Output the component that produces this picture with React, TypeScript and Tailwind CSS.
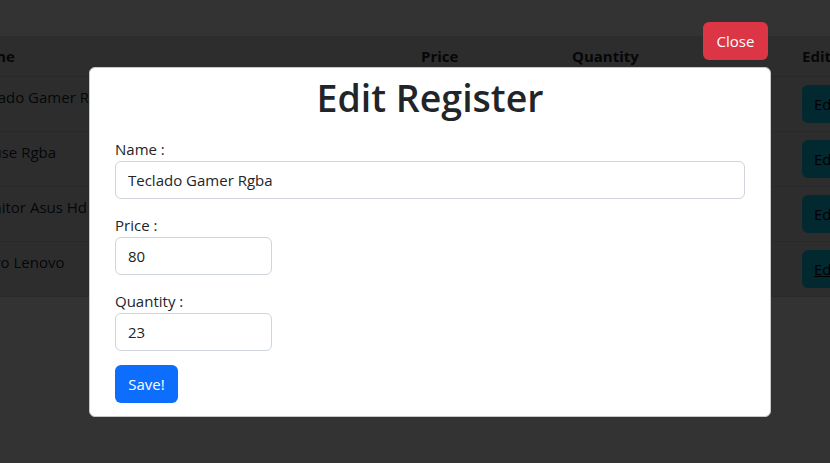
import React from "react";

const rows = [
  { name: "Teclado Gamer Rgba", price: 80, quantity: 23 },
  { name: "Mouse Rgba", price: 35, quantity: 40 },
  { name: "Monitor Asus Hd", price: 210, quantity: 12 },
  { name: "Micro Lenovo", price: 950, quantity: 5 },
];

const Field: React.FC<{ label: string; value: string; wide?: boolean }> = ({
  label,
  value,
  wide,
}) => (
  <div className="mb-[14px] flex flex-col">
    <label className="h-6 leading-6">{label}</label>
    <input
      readOnly
      value={value}
      className={`h-[38px] rounded-[6px] border border-[#ced4da] bg-white px-3 text-[15px] text-[#212529] outline-none ${
        wide ? "w-full" : "w-[157px]"
      }`}
    />
  </div>
);

export default function App() {
  return (
    <div className="relative h-[463px] w-[830px] overflow-hidden bg-white font-['Segoe_UI','Open_Sans',sans-serif] text-[15px] text-[#212529]">
      {/* page under the backdrop */}
      <div className="pt-[36px]">
        <div className="-ml-[38px] w-[900px] bg-[#dee2e6]">
          <div className="grid grid-cols-[451px_151px_230px_68px] border-b border-[#c9cccf] font-bold">
            <div className="p-2 leading-6">Name</div>
            <div className="p-2 leading-6">Price</div>
            <div className="p-2 leading-6">Quantity</div>
            <div className="p-2 leading-6">Edit</div>
          </div>
          {rows.map((r, i) => (
            <div
              key={r.name}
              className="grid grid-cols-[451px_151px_230px_68px] items-start border-b border-[#c9cccf]"
            >
              <div className="p-2 leading-6">{r.name}</div>
              <div className="p-2 leading-6">{r.price}</div>
              <div className="p-2 leading-6">{r.quantity}</div>
              <div className="p-2">
                <button
                  className={`h-[38px] rounded-[6px] bg-[#0dcaf0] px-3 text-black ${
                    i === rows.length - 1 ? "underline" : ""
                  }`}
                >
                  Edit
                </button>
              </div>
            </div>
          ))}
        </div>
      </div>

      {/* backdrop */}
      <div className="absolute inset-0 bg-black/80" />

      {/* modal */}
      <div className="absolute inset-0 pl-[89px] pt-[22px]">
        <div className="flex w-[682px] flex-col items-end">
          <button className="mr-[3px] h-[38px] w-[65px] rounded-[6px] bg-[#dc3545] text-white">
            Close
          </button>
          <div className="mt-[7px] w-full rounded-[6px] border border-[#c8c8c8] bg-white px-[25px] pb-[13px] pt-[6px]">
            <h1 className="mb-[15px] text-center text-[37.5px] leading-[48px] font-semibold text-[#212529]">
              Edit Register
            </h1>
            <Field label="Name :" value="Teclado Gamer Rgba" wide />
            <Field label="Price :" value="80" />
            <Field label="Quantity :" value="23" />
            <button className="h-[38px] w-[63px] rounded-[6px] bg-[#0d6efd] text-white">
              Save!
            </button>
          </div>
        </div>
      </div>
    </div>
  );
}
